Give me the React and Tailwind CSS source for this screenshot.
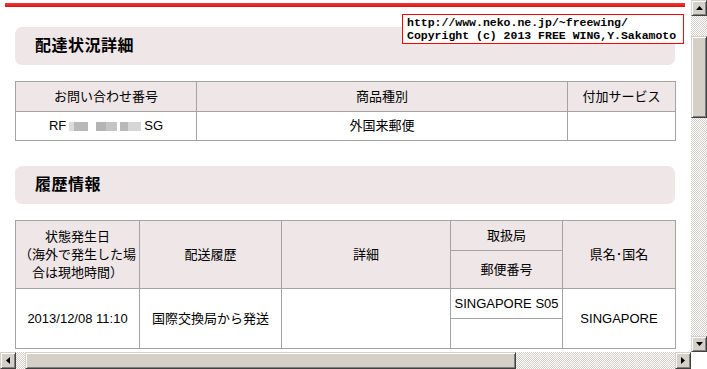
const HEAD = "bg-[#eee6e7]";
const CELL = "border border-[#a3a3a3] text-center align-middle font-normal";

function Btn({ children, className = "" }) {
  return (
    <div
      className={`flex items-center justify-center bg-[#d4d0c8] border border-t-[#d4d0c8] border-l-[#d4d0c8] border-r-[#404040] border-b-[#404040] shadow-[inset_1px_1px_#ffffff,inset_-1px_-1px_#808080] ${className}`}
    >
      {children}
    </div>
  );
}

const CHECKER = "bg-[repeating-conic-gradient(#d4d0c8_0%_25%,#ffffff_0%_50%)] bg-[length:2px_2px]";

function Arrow({ dir }) {
  const pts = {
    up: "0,4 7,4 3.5,0",
    down: "0,0 7,0 3.5,4",
    left: "4,0 4,7 0,3.5",
    right: "0,0 0,7 4,3.5",
  }[dir];
  const vertical = dir === "up" || dir === "down";
  return (
    <svg width={vertical ? 7 : 4} height={vertical ? 4 : 7} viewBox={vertical ? "0 0 7 4" : "0 0 4 7"}>
      <polygon points={pts} fill="#000" />
    </svg>
  );
}

function SectionTitle({ children, className = "" }) {
  return (
    <div className={`${HEAD} rounded-[7px] h-[38px] flex items-center pl-[20px] ${className}`}>
      <h2 className="text-[16px] font-bold text-black tracking-[0.5px]">{children}</h2>
    </div>
  );
}

// blurred tracking number
function Masked() {
  return (
    <span className="inline-flex items-center h-[9px] mx-[3px] align-middle">
      <span className="w-[5px] h-full bg-[#dcdcdc]" />
      <span className="w-[14px] h-full bg-[#b9b9b9]" />
      <span className="w-[8px] h-full bg-white" />
      <span className="w-[10px] h-full bg-[#b4b4b4]" />
      <span className="w-[11px] h-full bg-[#c4c4c4]" />
      <span className="w-[3px] h-full bg-white" />
      <span className="w-[8px] h-full bg-[#b8b8b8]" />
      <span className="w-[13px] h-full bg-[#d6d6d6]" />
    </span>
  );
}

export default function App() {
  return (
    <div
      className="w-[707px] h-[369px] grid grid-cols-[691px_16px] grid-rows-[352px_17px] bg-white overflow-hidden text-black"
      style={{ fontFamily: '"Liberation Sans", "Noto Sans CJK JP", sans-serif' }}
    >
      {/* page */}
      <div className="relative overflow-hidden">
        <div className="ml-[5px] mt-[3px] w-[680px] h-[4px] bg-gradient-to-b from-[#f43a3a] to-[#d80d0d]" />

        <div className="ml-[15px] w-[660px]">
          <SectionTitle className="mt-[20px]">配達状況詳細</SectionTitle>

          <table className="mt-[16px] w-[660px] table-fixed border-collapse text-[13px]">
            <colgroup>
              <col className="w-[181px]" />
              <col className="w-[371px]" />
              <col className="w-[108px]" />
            </colgroup>
            <thead>
              <tr className={`h-[30px] ${HEAD}`}>
                <th className={CELL}>お問い合わせ番号</th>
                <th className={CELL}>商品種別</th>
                <th className={CELL}>付加サービス</th>
              </tr>
            </thead>
            <tbody>
              <tr className="h-[29px]">
                <td className={CELL}>
                  RF<Masked />SG
                </td>
                <td className={CELL}>外国来郵便</td>
                <td className={CELL}></td>
              </tr>
            </tbody>
          </table>

          <SectionTitle className="mt-[25px]">履歴情報</SectionTitle>

          <table className="mt-[16px] w-[660px] table-fixed border-collapse text-[13px] leading-[18px]">
            <colgroup>
              <col className="w-[124px]" />
              <col className="w-[142px]" />
              <col className="w-[169px]" />
              <col className="w-[112px]" />
              <col className="w-[113px]" />
            </colgroup>
            <thead className={HEAD}>
              <tr className="h-[30px]">
                <th rowSpan={2} className={`${CELL} px-0 whitespace-nowrap`}>
                  状態発生日
                  <br />
                  （海外で発生した場
                  <br />
                  合は現地時間）
                </th>
                <th rowSpan={2} className={CELL}>配送履歴</th>
                <th rowSpan={2} className={CELL}>詳細</th>
                <th className={CELL}>取扱局</th>
                <th rowSpan={2} className={CELL}>県名･国名</th>
              </tr>
              <tr className="h-[38px]">
                <th className={CELL}>郵便番号</th>
              </tr>
            </thead>
            <tbody>
              <tr className="h-[30px]">
                <td rowSpan={2} className={CELL}>2013/12/08 11:10</td>
                <td rowSpan={2} className={CELL}>国際交換局から発送</td>
                <td rowSpan={2} className={CELL}></td>
                <td className={CELL}>SINGAPORE S05</td>
                <td rowSpan={2} className={CELL}>SINGAPORE</td>
              </tr>
              <tr className="h-[30px]">
                <td className={CELL}></td>
              </tr>
            </tbody>
          </table>
        </div>

        {/* fixed copyright overlay */}
        <div
          className="absolute left-[402px] top-[14px] w-[282px] border border-[#ff0000] bg-white pl-[4px] pt-[1px] pb-[1px] text-[11.5px] leading-[13px] font-bold whitespace-nowrap"
          style={{ fontFamily: '"Liberation Mono", monospace' }}
        >
          <div>http://www.neko.ne.jp/~freewing/</div>
          <div>Copyright (c) 2013 FREE WING,Y.Sakamoto</div>
        </div>
      </div>

      {/* vertical scrollbar */}
      <div className="flex flex-col">
        <Btn className="h-[16px]"><Arrow dir="up" /></Btn>
        <div className={`h-[20px] ${CHECKER}`} />
        <Btn className="h-[82px]" />
        <div className={`flex-1 ${CHECKER}`} />
        <Btn className="h-[16px]"><Arrow dir="down" /></Btn>
      </div>

      {/* horizontal scrollbar */}
      <div className="flex">
        <Btn className="w-[16px]"><Arrow dir="left" /></Btn>
        <div className={`w-[9px] ${CHECKER}`} />
        <Btn className="w-[491px]" />
        <div className={`flex-1 ${CHECKER}`} />
        <Btn className="w-[16px]"><Arrow dir="right" /></Btn>
      </div>

      <div className="bg-white" />
    </div>
  );
}
